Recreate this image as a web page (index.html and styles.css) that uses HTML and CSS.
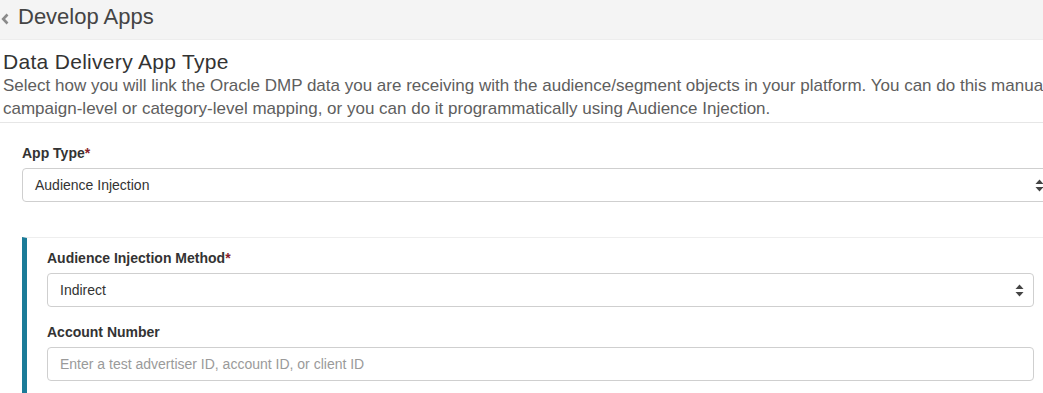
FILE: index.html
```html
<!DOCTYPE html>
<html>
<head>
<meta charset="utf-8">
<link rel="stylesheet" href="styles.css">
</head>
<body>
<div class="topbar">
  <svg class="back" width="10" height="14" viewBox="0 0 10 14"><path d="M7.5 2.5 L3.2 7 L7.5 11.5" fill="none" stroke="#8a8a8a" stroke-width="2.6"/></svg>
  <span class="topbar-title">Develop Apps</span>
</div>
<div class="page">
  <div class="intro">
    <h1 class="title">Data Delivery App Type</h1>
    <p class="desc">Select how you will link the Oracle DMP data you are receiving with the audience/segment objects in your platform. You can do this manually using campaign-level or category-level mapping, or you can do it programmatically using Audience Injection.</p>
  </div>
  <div class="form">
    <div class="field">
      <label class="label">App Type<span class="req">*</span></label>
      <div class="select">
        <span class="select-value">Audience Injection</span>
        <svg class="arrows" width="9" height="13" viewBox="0 0 9 13"><path d="M4.5 0.5 L8.5 5 L0.5 5 Z" fill="#444"/><path d="M0.5 8 L8.5 8 L4.5 12.5 Z" fill="#444"/></svg>
      </div>
    </div>
    <div class="panel">
      <div class="field">
        <label class="label">Audience Injection Method<span class="req">*</span></label>
        <div class="select">
          <span class="select-value">Indirect</span>
          <svg class="arrows" width="9" height="13" viewBox="0 0 9 13"><path d="M4.5 0.5 L8.5 5 L0.5 5 Z" fill="#444"/><path d="M0.5 8 L8.5 8 L4.5 12.5 Z" fill="#444"/></svg>
        </div>
      </div>
      <div class="field">
        <label class="label">Account Number</label>
        <div class="input"><span class="placeholder">Enter a test advertiser ID, account ID, or client ID</span></div>
      </div>
    </div>
  </div>
</div>
</body>
</html>
```

FILE: styles.css
```css
html, body {
  margin: 0;
  padding: 0;
  background: #ffffff;
}
body {
  width: 1043px;
  height: 393px;
  overflow: hidden;
  font-family: "Liberation Sans", Arial, sans-serif;
  color: #333333;
}
.topbar {
  height: 40px;
  background: #f4f4f4;
  border-bottom: 1px solid #ededed;
  display: flex;
  align-items: center;
  padding-left: 0;
  box-sizing: border-box;
}
.back {
  display: block;
  margin-right: 8px;
  margin-top: -2px;
}
.topbar-title {
  font-size: 22px;
  color: #444444;
  line-height: 40px;
  margin-top: -5px;
}
.page {
  width: 1140px;
}
.intro {
  padding: 10px 0 0 3px;
  border-bottom: 1px solid #e6e6e6;
  width: 1112px;
}
.title {
  margin: 0;
  font-size: 21px;
  font-weight: normal;
  letter-spacing: 0.3px;
  line-height: 24px;
  color: #333333;
}
.desc {
  margin: 0 0 2px 0;
  font-size: 17px;
  line-height: 23px;
  color: #5e5e5e;
}
.form {
  padding: 21px 0 0 22px;
  width: 1032px;
}
.field {
  display: flex;
  flex-direction: column;
}
.label {
  font-size: 14px;
  font-weight: bold;
  line-height: 18px;
  color: #333333;
  margin-bottom: 6px;
}
.req {
  color: #8a1f2c;
}
.select, .input {
  height: 34px;
  border: 1px solid #cfcfcf;
  border-radius: 4px;
  box-sizing: border-box;
  display: flex;
  align-items: center;
  padding: 0 12px;
  font-size: 14px;
  background: #ffffff;
}
.select {
  justify-content: space-between;
  padding-right: 9px;
}
.select-value {
  color: #333333;
}
.placeholder {
  color: #9a9a9a;
}
.arrows {
  display: block;
}
.panel {
  margin-top: 35px;
  border-top: 1px solid #eeeeee;
  border-left: 5px solid #1b7b98;
  padding: 11px 20px 20px 20px;
  display: flex;
  flex-direction: column;
  gap: 16px;
}
```
